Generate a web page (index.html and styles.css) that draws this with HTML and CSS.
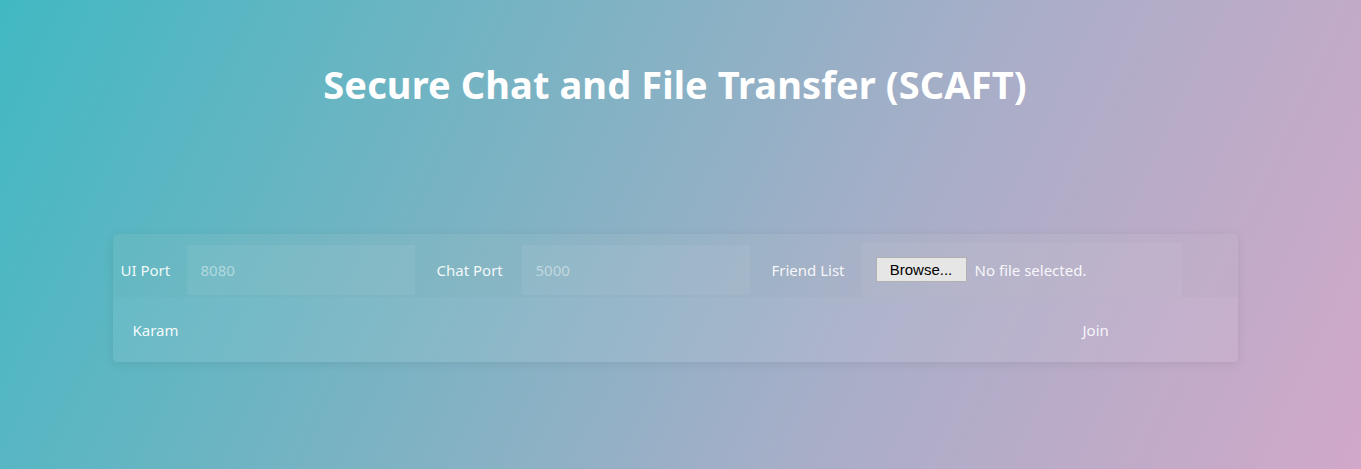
FILE: index.html
```html
<!DOCTYPE html>
<html lang="en">
<head>
<meta charset="utf-8">
<title>SCAFT</title>
<link rel="stylesheet" href="styles.css">
</head>
<body>
<div class="page">
  <h1 class="title">Secure Chat and File Transfer (SCAFT)</h1>
  <form class="card">
    <div class="row row-top">
      <label class="lbl lbl-ui">UI Port</label>
      <input class="field" type="text" placeholder="8080">
      <label class="lbl lbl-chat">Chat Port</label>
      <input class="field" type="text" placeholder="5000">
      <label class="lbl lbl-friend">Friend List</label>
      <div class="file">
        <button type="button" class="browse">Browse...</button>
        <span class="nofile">No file selected.</span>
      </div>
    </div>
    <div class="row row-bottom">
      <input class="name" type="text" value="Karam">
      <button type="button" class="join">Join</button>
    </div>
  </form>
</div>
</body>
</html>
```
FILE: styles.css
```css
html, body {
  margin: 0;
  height: 100%;
}
body {
  background: linear-gradient(115deg, #41b9c2 0%, #79b3c3 35%, #a9aec8 65%, #d1a8c9 100%);
  font-family: "Noto Sans", Lato, sans-serif;
  color: #fff;
  overflow: hidden;
}
.page {
  display: flex;
  flex-direction: column;
  align-items: center;
  padding-top: 61px;
  padding-right: 11px;
}
.title {
  margin: 0;
  font-size: 38px;
  font-weight: 700;
  line-height: 46px;
  color: #fff;
  letter-spacing: 0.1px;
}
.card {
  margin-top: 127px;
  width: 1125px;
  border-radius: 4px;
  background: rgba(255,255,255,0.08);
  box-shadow: 0 2px 10px rgba(0,0,0,0.08);
  overflow: hidden;
}
.row {
  display: flex;
  align-items: center;
  height: 64px;
  box-sizing: border-box;
}
.row-top {
  padding-top: 8px;
  background: rgba(0,0,0,0.015);
  border-bottom: 1px solid rgba(255,255,255,0.03);
}
.lbl {
  font-size: 15px;
  color: rgba(255,255,255,0.92);
}
.lbl-ui { margin-left: 8px; width: 66px; }
.lbl-chat { margin-left: 22px; width: 85px; }
.lbl-friend { margin-left: 22px; width: 90px; }
.field {
  width: 228px;
  height: 50px;
  box-sizing: border-box;
  border: none;
  outline: none;
  background: rgba(255,255,255,0.06);
  padding: 0 14px;
  font-family: inherit;
  font-size: 15px;
  color: #fff;
}
.field::placeholder {
  color: rgba(255,255,255,0.45);
}
.file {
  width: 320px;
  height: 54px;
  box-sizing: border-box;
  background: rgba(255,255,255,0.05);
  display: flex;
  align-items: center;
  padding-left: 14px;
}
.browse {
  width: 91px;
  height: 25px;
  padding: 0;
  border: 1px solid #b0b0b0;
  background: #e6e6e6;
  color: #000;
  font-family: "Liberation Sans", Arial, sans-serif;
  font-size: 15px;
  border-radius: 0;
}
.nofile {
  margin-left: 8px;
  font-size: 15px;
  color: rgba(255,255,255,0.92);
}
.name {
  margin-left: 20px;
  width: 300px;
  border: none;
  outline: none;
  background: transparent;
  padding: 0;
  font-family: inherit;
  font-size: 15px;
  color: rgba(255,255,255,0.95);
}
.join {
  margin-left: auto;
  margin-right: 95px;
  width: 60px;
  border: none;
  background: transparent;
  padding: 0;
  font-family: inherit;
  font-size: 15px;
  color: rgba(255,255,255,0.9);
  text-align: left;
}
```
